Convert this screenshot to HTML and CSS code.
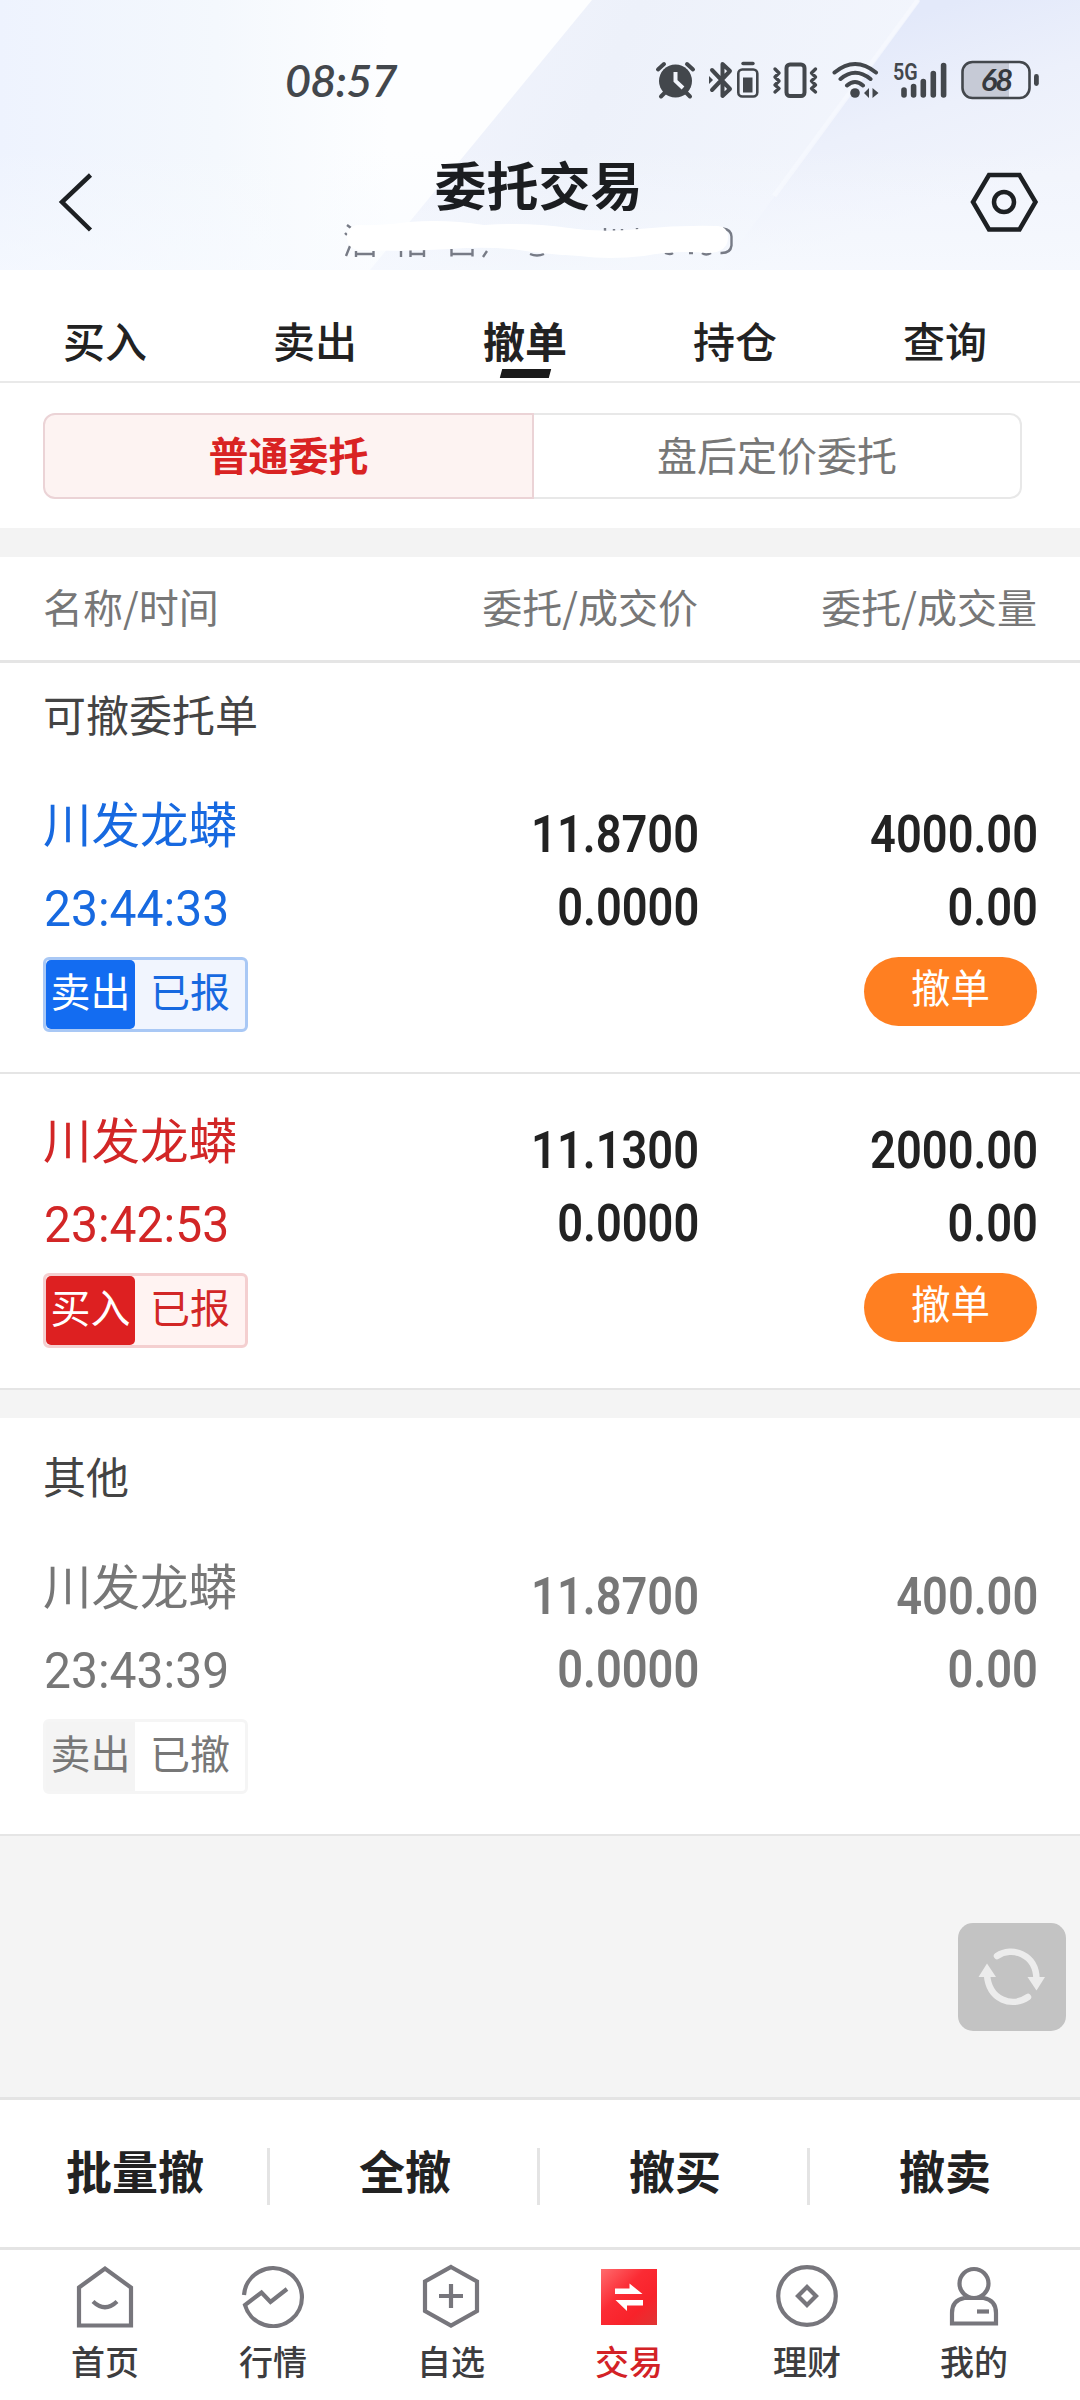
FILE: index.html
```html
<!DOCTYPE html>
<html lang="zh-CN">
<head>
<meta charset="utf-8">
<title>委托交易</title>
<link rel="stylesheet" href="styles.css">
</head>
<body>
<div class="screen">
  <header class="header">
    <svg class="header-bg" viewBox="0 0 1080 270" preserveAspectRatio="none" aria-hidden="true">
      <defs>
        <linearGradient id="base" x1="0" x2="1" y1="0" y2="0">
          <stop offset="0" stop-color="#eef3fe"/><stop offset=".2" stop-color="#f4f8fd"/><stop offset=".36" stop-color="#fdfeff"/><stop offset="1" stop-color="#fdfeff"/>
        </linearGradient>
        <linearGradient id="band" gradientUnits="userSpaceOnUse" x1="450" y1="100" x2="860" y2="280">
          <stop offset="0" stop-color="#f0f3fc"/><stop offset=".3" stop-color="#edf1fa"/><stop offset="1" stop-color="#f3f6fd"/>
        </linearGradient>
        <linearGradient id="far" gradientUnits="userSpaceOnUse" x1="900" y1="20" x2="960" y2="200">
          <stop offset="0" stop-color="#e3e9fa"/><stop offset=".5" stop-color="#ecf0fb"/><stop offset="1" stop-color="#f1f4fc"/>
        </linearGradient>
        <linearGradient id="fade" x1="0" x2="0" y1="0" y2="1">
          <stop offset=".55" stop-color="#f8fbff" stop-opacity="0"/><stop offset="1" stop-color="#f8fbff" stop-opacity=".6"/>
        </linearGradient>
      </defs>
      <rect width="1080" height="270" fill="url(#base)"/>
      <path d="M592 0H1080V270H370Z" fill="url(#band)"/>
      <path d="M920 0H1080V270H720Z" fill="url(#far)"/>
      <path d="M918 0L774 196" stroke="#f8faff" stroke-width="5" opacity=".7"/>
      <rect width="1080" height="270" fill="url(#fade)"/>
    </svg>
    <div class="status-bar">
      <span class="clock">08:57</span>
      <div class="status-icons">
        <svg width="42" height="40" viewBox="0 0 42 40"><circle cx="20.5" cy="21" r="16.5" fill="#43474c"/><path d="M20.5 12V21L28 28" fill="none" stroke="#f1f4fb" stroke-width="4"/><path d="M3 9.500L9 4M32 4l6 5.500M6 36.500l6-6M35 36.500l-6-6" stroke="#43474c" stroke-width="4" stroke-linecap="round"/></svg>
        <svg class="gap-bt" width="52" height="40" viewBox="0 0 52 40"><g fill="none" stroke="#43474c"><path d="M4 10L22 29L14.500 36V4L22 11L4 30" stroke-width="4" stroke-linejoin="round" stroke-linecap="round"/><rect x="30.300" y="9.500" width="19" height="27" rx="4" stroke-width="2.600"/><path d="M35 3.500h10" stroke-width="3.400" stroke-linecap="round"/></g><path d="M35 17.500h9.500v15H35zM1 16l4 4-4 4z" fill="#43474c"/></svg>
        <svg class="gap-vib" width="47" height="40" viewBox="0 0 47 40"><g fill="none" stroke="#43474c" stroke-linecap="round" stroke-linejoin="round"><rect x="14.500" y="4.500" width="18" height="31.500" rx="3.500" stroke-width="4"/><path d="M3 9l4 4L3 17l4 4L3 25l4 3.500L3 32M43.500 9l-4 4 4 4-4 4 4 4-4 3.500 4 3.500" stroke-width="3.400"/></g></svg>
        <svg class="gap-wifi" width="50" height="40" viewBox="0 0 50 40"><g fill="none" stroke="#43474c" stroke-width="4" stroke-linecap="round"><path d="M3.500 12.500Q24-4.500 45 12.500M9.500 19Q24 6.500 39.500 19M16 25.500Q24 18.500 32 25.500"/></g><circle cx="24" cy="33" r="4.800" fill="#43474c"/><path d="M38 28v10l-5-5zM41.500 28v10l6-5z" fill="#43474c"/></svg>
        <div class="signal gap-sig"><span class="net">5G</span><svg width="56" height="40" viewBox="0 0 56 40"><path d="M12 30v5M21.600 26.500v8.500M31.300 21.500v13.500M41.300 13.500v21.500M51.600 5.500v29.500" stroke="#43474c" stroke-width="5.600" stroke-linecap="round"/></svg></div>
        <div class="battery gap-bat"><svg width="80" height="40" viewBox="0 0 80 40"><path d="M10 3H49V37H10Q3 37 3 30V10Q3 3 10 3Z" fill="#c6cad6"/><rect x="2.500" y="2" width="67" height="36" rx="10" fill="none" stroke="#43474c" stroke-width="2.600"/><rect x="74" y="14" width="4.800" height="12" rx="2.400" fill="#43474c"/></svg><span class="charge">68</span></div>
      </div>
    </div>
    <div class="title-bar">
      <svg class="back" width="40" height="64" viewBox="0 0 40 64"><path d="M34.500 5L6 32L34.500 60" fill="none" stroke="#1d2023" stroke-width="4.500"/></svg>
      <div class="title-block">
        <h1 class="title">委托交易</h1>
        <svg class="account" width="400" height="46" viewBox="0 0 400 46" aria-hidden="true">
          <g fill="none" stroke="#777b86" stroke-width="2.400"><path d="M8 7l4 3M6 15l2 2M11 28l-4 10M17 33v6M34.500 33v6M17 36h17.500M62 33v6M71.500 32v7M85 32v7M71.500 36H85M112.500 31v7.500M133.500 31v7.500M112.500 36h21M148 33l-4 6M191 36q7 3 14 0M266 10v4M275 11v3M283 11v3M298 10v3M326 35q5 2 8 0M350 35h4M363 35q4 3 9 0M384 10.500q8 1 8.500 8v9q-1 8-11 7.500"/></g>
          <path d="M8 18Q9 7 20 7Q45 8 70 4Q108 1 145 7Q190 4 230 10Q263 15 300 11Q340 7 379 8Q389 9 389 19Q389 34 370 35Q335 32 305 38Q270 42 240 38Q205 36 180 32Q150 28 110 31Q65 34 20 32Q8 31 8 18Z" fill="#fff"/>
        </svg>
      </div>
      <svg class="settings" width="70" height="64" viewBox="0 0 70 64"><g fill="none" stroke="#1d2023" stroke-width="4.500"><path d="M20 5H50.500L66.500 32L50.500 59.500H20L4 32Z"/><circle cx="35" cy="32" r="10"/></g></svg>
    </div>
  </header>

  <nav class="tabs">
    <span class="tab">买入</span><span class="tab">卖出</span><span class="tab active">撤单</span><span class="tab">持仓</span><span class="tab">查询</span>
  </nav>

  <div class="segments">
    <div class="segment selected">普通委托</div><div class="segment">盘后定价委托</div>
  </div>

  <div class="columns-head">
    <span>名称/时间</span><span>委托/成交价</span><span>委托/成交量</span>
  </div>

  <section class="group">
    <h2 class="group-title">可撤委托单</h2>
    <article class="order sell">
      <div class="info"><div class="name">川发龙蟒</div><div class="time"><span>23:44:33</span></div><div class="badge"><span class="side">卖出</span><span class="state">已报</span></div></div>
      <div class="figures"><span>11.8700</span><span>0.0000</span></div>
      <div class="figures"><span>4000.00</span><span>0.00</span><button class="cancel">撤单</button></div>
    </article>
    <article class="order buy">
      <div class="info"><div class="name">川发龙蟒</div><div class="time"><span>23:42:53</span></div><div class="badge"><span class="side">买入</span><span class="state">已报</span></div></div>
      <div class="figures"><span>11.1300</span><span>0.0000</span></div>
      <div class="figures"><span>2000.00</span><span>0.00</span><button class="cancel">撤单</button></div>
    </article>
  </section>

  <section class="group others">
    <h2 class="group-title">其他</h2>
    <article class="order done">
      <div class="info"><div class="name">川发龙蟒</div><div class="time"><span>23:43:39</span></div><div class="badge"><span class="side">卖出</span><span class="state">已撤</span></div></div>
      <div class="figures"><span>11.8700</span><span>0.0000</span></div>
      <div class="figures"><span>400.00</span><span>0.00</span></div>
    </article>
  </section>

  <div class="blank">
    <button class="refresh" aria-label="刷新">
      <svg width="108" height="108" viewBox="0 0 108 108"><g fill="none" stroke="#ececec" stroke-width="6.500" stroke-linecap="round"><path d="M39 33C54 23 78 31 78.500 56"/><path d="M29 52C31 77 54 85 70 74"/></g><path d="M69.500 54H87L78.500 67.500ZM20.500 54H38L29 40.500Z" fill="#ececec"/></svg>
    </button>
  </div>

  <div class="actions">
    <span>批量撤</span><span>全撤</span><span>撤买</span><span>撤卖</span>
  </div>

  <nav class="bottom-nav">
    <div class="nav-item"><svg width="64" height="64" viewBox="0 0 64 64"><g fill="none" stroke="#77767c" stroke-width="4.200"><path d="M6 23.500L32 4.500L58 23.500V61.500H6Z"/><path d="M20 37.500Q32 49 44 37.500"/></g></svg><span>首页</span></div>
    <div class="nav-item"><svg width="64" height="64" viewBox="0 0 64 64"><path d="M3 31A29 29 0 1 1 4 41L20.500 28.500L29.500 38L46 25" fill="none" stroke="#77767c" stroke-width="4.200"/></svg><span>行情</span></div>
    <div class="nav-item"><svg width="64" height="64" viewBox="0 0 64 64"><g fill="none" stroke="#77767c" stroke-width="4.200"><path d="M32 3L58 17.500V47L32 61.500L6 47V17.500Z"/><path d="M32 20V44M20 32H44"/></g></svg><span>自选</span></div>
    <div class="nav-item current"><svg width="64" height="64" viewBox="0 0 64 64"><defs><linearGradient id="red" x1="0" y1="0" x2="1" y2="1"><stop offset="0" stop-color="#ff6b6d"/><stop offset=".4" stop-color="#fb2b34"/><stop offset=".7" stop-color="#f8222a"/><stop offset="1" stop-color="#df3534"/></linearGradient></defs><rect x="4" y="5" width="56" height="56" fill="url(#red)"/><path d="M18 24.500H32.500V19.500L45.500 30H18ZM46 41.500H30V47L18.500 36H46Z" fill="#fff"/></svg><span>交易</span></div>
    <div class="nav-item"><svg width="64" height="64" viewBox="0 0 64 64"><g fill="none" stroke="#77767c" stroke-width="4.200"><circle cx="32" cy="32" r="28.800"/><path d="M32 23L41 32L32 41L23 32Z"/></g></svg><span>理财</span></div>
    <div class="nav-item"><svg width="64" height="64" viewBox="0 0 64 64"><g fill="none" stroke="#77767c" stroke-width="4.200"><circle cx="32" cy="19.500" r="14.500"/><path d="M22.500 34H41.500Q54 36 54 49V59.500H10V49Q10 36 22.500 34"/><path d="M35 47.500H47"/></g></svg><span>我的</span></div>
  </nav>
</div>
</body>
</html>
```
FILE: styles.css
```css
* { box-sizing: border-box; }
body {
  margin: 0;
  background: #fff;
  font-family: "Noto Sans CJK SC", sans-serif;
  color: #222;
}
h1, h2 { margin: 0; font-weight: 400; }
button { border: 0; padding: 0; font: inherit; }
svg { display: block; }

.screen {
  width: 1080px;
  height: 2400px;
  display: flex;
  flex-direction: column;
  overflow: hidden;
}

/* Header */
.header { position: relative; height: 270px; }
.header-bg { position: absolute; inset: 0; width: 100%; height: 100%; }
.status-bar {
  position: relative;
  height: 140px;
  padding: 60px 40px 0 285px;
  display: flex;
  justify-content: space-between;
}
.clock {
  font: italic 600 45px/40px Lato, sans-serif;
  letter-spacing: -.8px;
  color: #43474c;
}
.status-icons { display: flex; }
.gap-bt { margin-left: 11px; }
.gap-vib { margin-left: 12px; }
.gap-wifi { margin-left: 12px; }
.gap-sig { margin-left: 11px; }
.gap-bat { margin-left: 12px; }
.signal, .battery { position: relative; height: 40px; }
.net {
  position: absolute;
  left: 1px;
  top: -3px;
  font: 600 24px/30px Roboto, sans-serif;
  color: #43474c;
  transform: scaleX(.82);
  transform-origin: left;
}
.charge {
  position: absolute;
  left: 0;
  top: 0;
  width: 72px;
  text-align: center;
  font: italic 700 31px/38px Lato, sans-serif;
  letter-spacing: -2px;
  color: #36393e;
}

.title-bar {
  position: relative;
  display: flex;
  justify-content: space-between;
  padding: 0 41px 0 56px;
}
.back, .settings { margin-top: 30px; }
.title-block {
  display: flex;
  flex-direction: column;
  align-items: center;
  padding-left: 12px;
}
.title {
  height: 78px;
  font-size: 52px;
  font-weight: 700;
  line-height: 88px;
  color: #1b1d20;
}

/* Tabs */
.tabs {
  display: flex;
  width: 1080px;
  height: 113px;
  padding: 46px 30px 0 0;
  border-bottom: 2px solid #e9e9e9;
}
.tab {
  flex: 1;
  display: flex;
  flex-direction: column;
  align-items: center;
  font-size: 42px;
  font-weight: 500;
  line-height: 48px;
  color: #222;
}
.tab.active { font-weight: 700; }
.tab.active::after {
  content: "";
  width: 49px;
  height: 9px;
  margin-top: 5px;
  background: #1a1a1a;
  transform: skewX(-15deg);
}

/* Order type switch */
.segments {
  display: flex;
  height: 174px;
  padding: 30px 58px 30px 43px;
  border-bottom: 29px solid #f3f3f3;
}
.segment {
  flex: 1;
  height: 86px;
  border: 2px solid #e8e8e8;
  border-left: 0;
  border-radius: 0 12px 12px 0;
  font-size: 40px;
  line-height: 78px;
  text-align: center;
  color: #777;
}
.segment.selected {
  flex: 0 0 491px;
  border: 2px solid #ebd3d6;
  border-radius: 12px 0 0 12px;
  background: #fdf3f2;
  color: #d92323;
  font-weight: 700;
}

/* List */
.columns-head, .order {
  display: grid;
  grid-template-columns: 300px 355px 1fr;
  padding: 0 43px;
}
.columns-head {
  height: 106px;
  border-bottom: 3px solid #e5e5e5;
  font-size: 40px;
  line-height: 98px;
  color: #777;
}
.columns-head span:not(:first-child) { text-align: right; }

.group-title {
  height: 95px;
  padding-left: 43px;
  font-size: 43px;
  line-height: 101px;
  color: #444;
}
.others { border-top: 28px solid #f4f4f4; }
.others .group-title { height: 102px; line-height: 115px; }

.order { height: 316px; border-bottom: 2px solid #e5e5e5; }
.info { padding-top: 34px; }
.name { font-size: 48.5px; line-height: 60px; }
.time {
  height: 50px;
  margin: 32px 0 23px;
  padding-left: 1px;
  font: 400 50px/50px Roboto, sans-serif;
}
.time span { display: inline-block; transform: scaleX(.96); transform-origin: left; }
.badge {
  display: flex;
  width: 205px;
  height: 75px;
  border: 3px solid;
  border-radius: 6px;
  font-size: 40px;
  line-height: 60px;
  text-align: center;
}
.side { width: 89px; border-radius: 5px; color: #fff; }
.state { flex: 1; }
.sell .name, .sell .time, .sell .state { color: #1769e0; }
.sell .badge { border-color: #a9c8f5; background: #f1f5fe; }
.sell .side { background: #136cf1; }
.buy .name, .buy .time, .buy .state { color: #d22626; }
.buy .badge { border-color: #f4cfd0; background: #fff3f2; }
.buy .side { background: #dd2021; }
.done .badge { border-color: #f5f5f5; background: #fff; }
.done .side { background: #f4f4f4; border-radius: 0; }
.done .name, .done .time, .done .side, .done .state, .done .figures { color: #777; }

.figures {
  display: flex;
  flex-direction: column;
  align-items: flex-end;
  padding-top: 40px;
  font-family: Roboto, sans-serif;
  font-size: 52px;
  font-weight: 600;
  line-height: 73px;
  color: #222;
}
.figures span { transform: translateX(1px) scaleX(.87); transform-origin: right; }
.cancel {
  width: 173px;
  height: 69px;
  margin-top: 13px;
  padding-bottom: 12px;
  border-radius: 35px;
  background: #ff7f21;
  font: 400 39.5px/57px "Noto Sans CJK SC", sans-serif;
  color: #fff;
}

.blank {
  flex: 1;
  padding: 87px 14px 0;
  background: #f4f4f4;
}
.refresh {
  display: block;
  width: 108px;
  height: 108px;
  margin-left: auto;
  border-radius: 15px;
  background: #c3c3c3;
}

/* Bulk actions */
.actions {
  display: grid;
  grid-template-columns: repeat(4, 1fr);
  height: 153px;
  padding-top: 48px;
  border-top: 3px solid #e4e4e4;
  border-bottom: 3px solid #e4e4e4;
}
.actions span {
  height: 57px;
  padding-left: 3px;
  border-right: 3px solid #e4e4e4;
  font-size: 46px;
  font-weight: 700;
  line-height: 42px;
  text-align: center;
}
.actions span:last-child { border-right-color: transparent; }

/* Bottom navigation */
.bottom-nav {
  display: grid;
  grid-template-columns: 168px 168px 188px 168px 188px 146px;
  height: 150px;
  padding: 14px 0 0 21px;
}
.nav-item {
  display: flex;
  flex-direction: column;
  align-items: center;
  font-size: 34px;
  font-weight: 500;
  line-height: 40px;
  color: #3d3d3f;
}
.nav-item span { margin-top: 13px; }
.nav-item.current { color: #d32226; }
```
